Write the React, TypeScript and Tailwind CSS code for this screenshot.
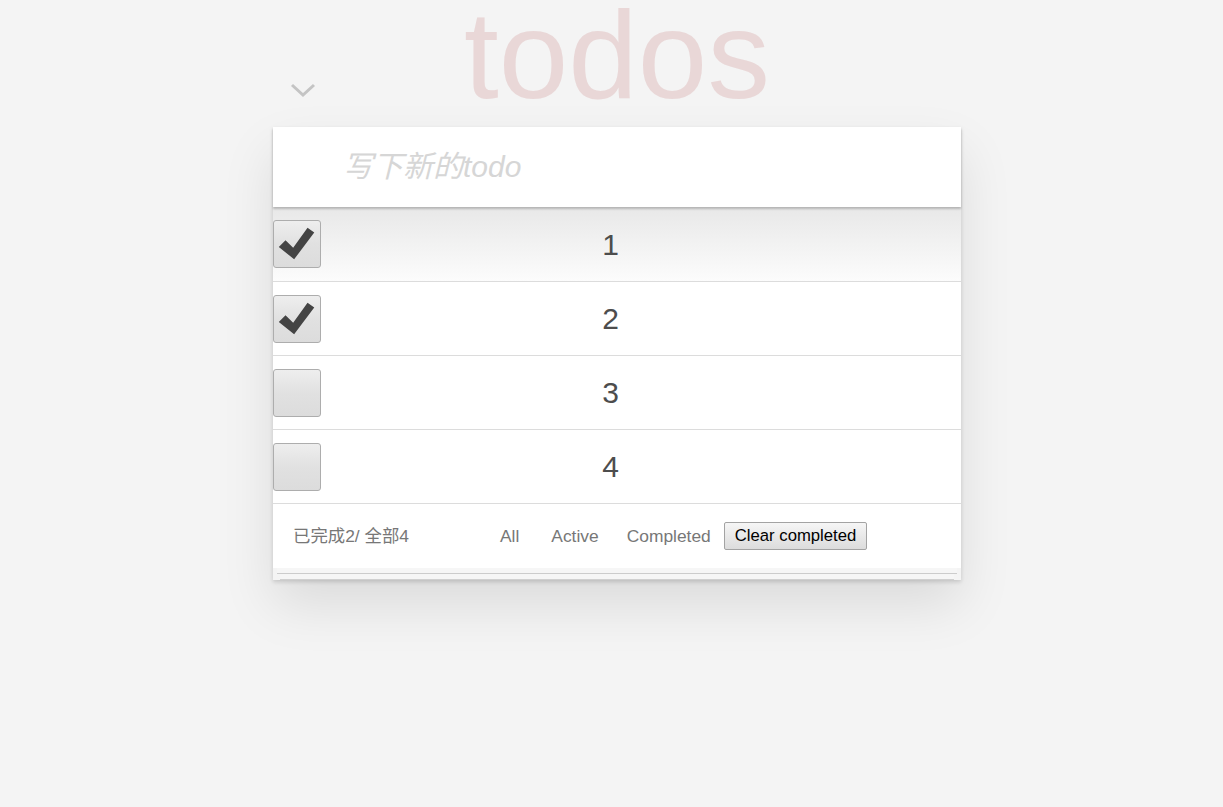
import React from 'react';

const todos = [
  { id: 1, title: '1', done: true },
  { id: 2, title: '2', done: true },
  { id: 3, title: '3', done: false },
  { id: 4, title: '4', done: false },
];

const Check: React.FC<{ done: boolean }> = ({ done }) => (
  <div className="w-[48px] h-[48px] shrink-0 rounded-[3px] border border-[#adadad] bg-gradient-to-b from-[#eeeeee] via-[#e1e1e1] to-[#dcdcdc] flex items-center justify-center">
    {done && (
      <svg width="48" height="48" viewBox="0 0 48 48">
        <polygon points="5,27 12,20 20,28 35,7 42,12 21,40" fill="#444" />
      </svg>
    )}
  </div>
);

const App: React.FC = () => {
  const left = todos.filter((t) => t.done).length;

  return (
    <div className="min-h-screen bg-[#f4f4f4] font-['Liberation_Sans','Noto_Sans_CJK_SC',sans-serif]">
      <div className="w-[688px] ml-[273px]">
        {/* title + toggle-all */}
        <div className="grid grid-cols-[1fr_auto_1fr] h-[127px]">
          <div className="flex items-end pl-[17px] pb-[29px]">
            <svg width="26" height="16" viewBox="0 0 26 16">
              <polyline points="2,3 13,13 24,3" fill="none" stroke="#c4c4c4" strokeWidth="3" />
            </svg>
          </div>
          <h1 className="text-[125px] leading-[110px] text-[#e9d7d7] text-center">todos</h1>
          <div />
        </div>

        <div className="shadow-[0_2px_4px_rgba(0,0,0,0.15),0_25px_50px_rgba(0,0,0,0.1)]">
          <div className="bg-white">
            {/* new todo */}
            <div className="relative z-10 h-[80px] flex items-center pl-[70px] shadow-[0_2px_2px_rgba(0,0,0,0.22)]">
              <span className="text-[30px] italic text-[#d6d6d6] leading-none">写下新的todo</span>
            </div>

            {/* list */}
            {todos.map((t, i) => (
              <div
                key={t.id}
                className={
                  i === 0
                    ? 'h-[75px] flex items-center border-b border-[#dcdcdc] bg-gradient-to-b from-[#e8e8e8] to-[#fcfcfc]'
                    : 'h-[74px] flex items-center border-b border-[#dcdcdc]'
                }
              >
                <Check done={t.done} />
                <div className="flex-1 mr-[61px] text-center text-[30px] text-[#4d4d4d]">{t.title}</div>
              </div>
            ))}

            {/* footer */}
            <div className="h-[64px] flex items-center pl-[20px] text-[17.4px] text-[#777]">
              <span className="w-[207px]">已完成{left}/ 全部{todos.length}</span>
              <a className="mr-[32px]">All</a>
              <a className="mr-[28px]">Active</a>
              <a className="mr-[13px]">Completed</a>
              <button className="h-[28px] px-[10px] rounded-[2px] border border-[#a3a3a3] bg-gradient-to-b from-[#f6f6f6] to-[#dcdcdc] text-[16.7px] text-black leading-none">
                Clear completed
              </button>
            </div>
          </div>
          <div className="mx-[4px] h-[6px] bg-[#f6f6f6] border-b border-[#cccccc]" />
          <div className="mx-[7px] h-[6px] bg-[#f6f6f6] border-b border-[#d0d0d0]" />
        </div>
      </div>
    </div>
  );
};

export default App;
